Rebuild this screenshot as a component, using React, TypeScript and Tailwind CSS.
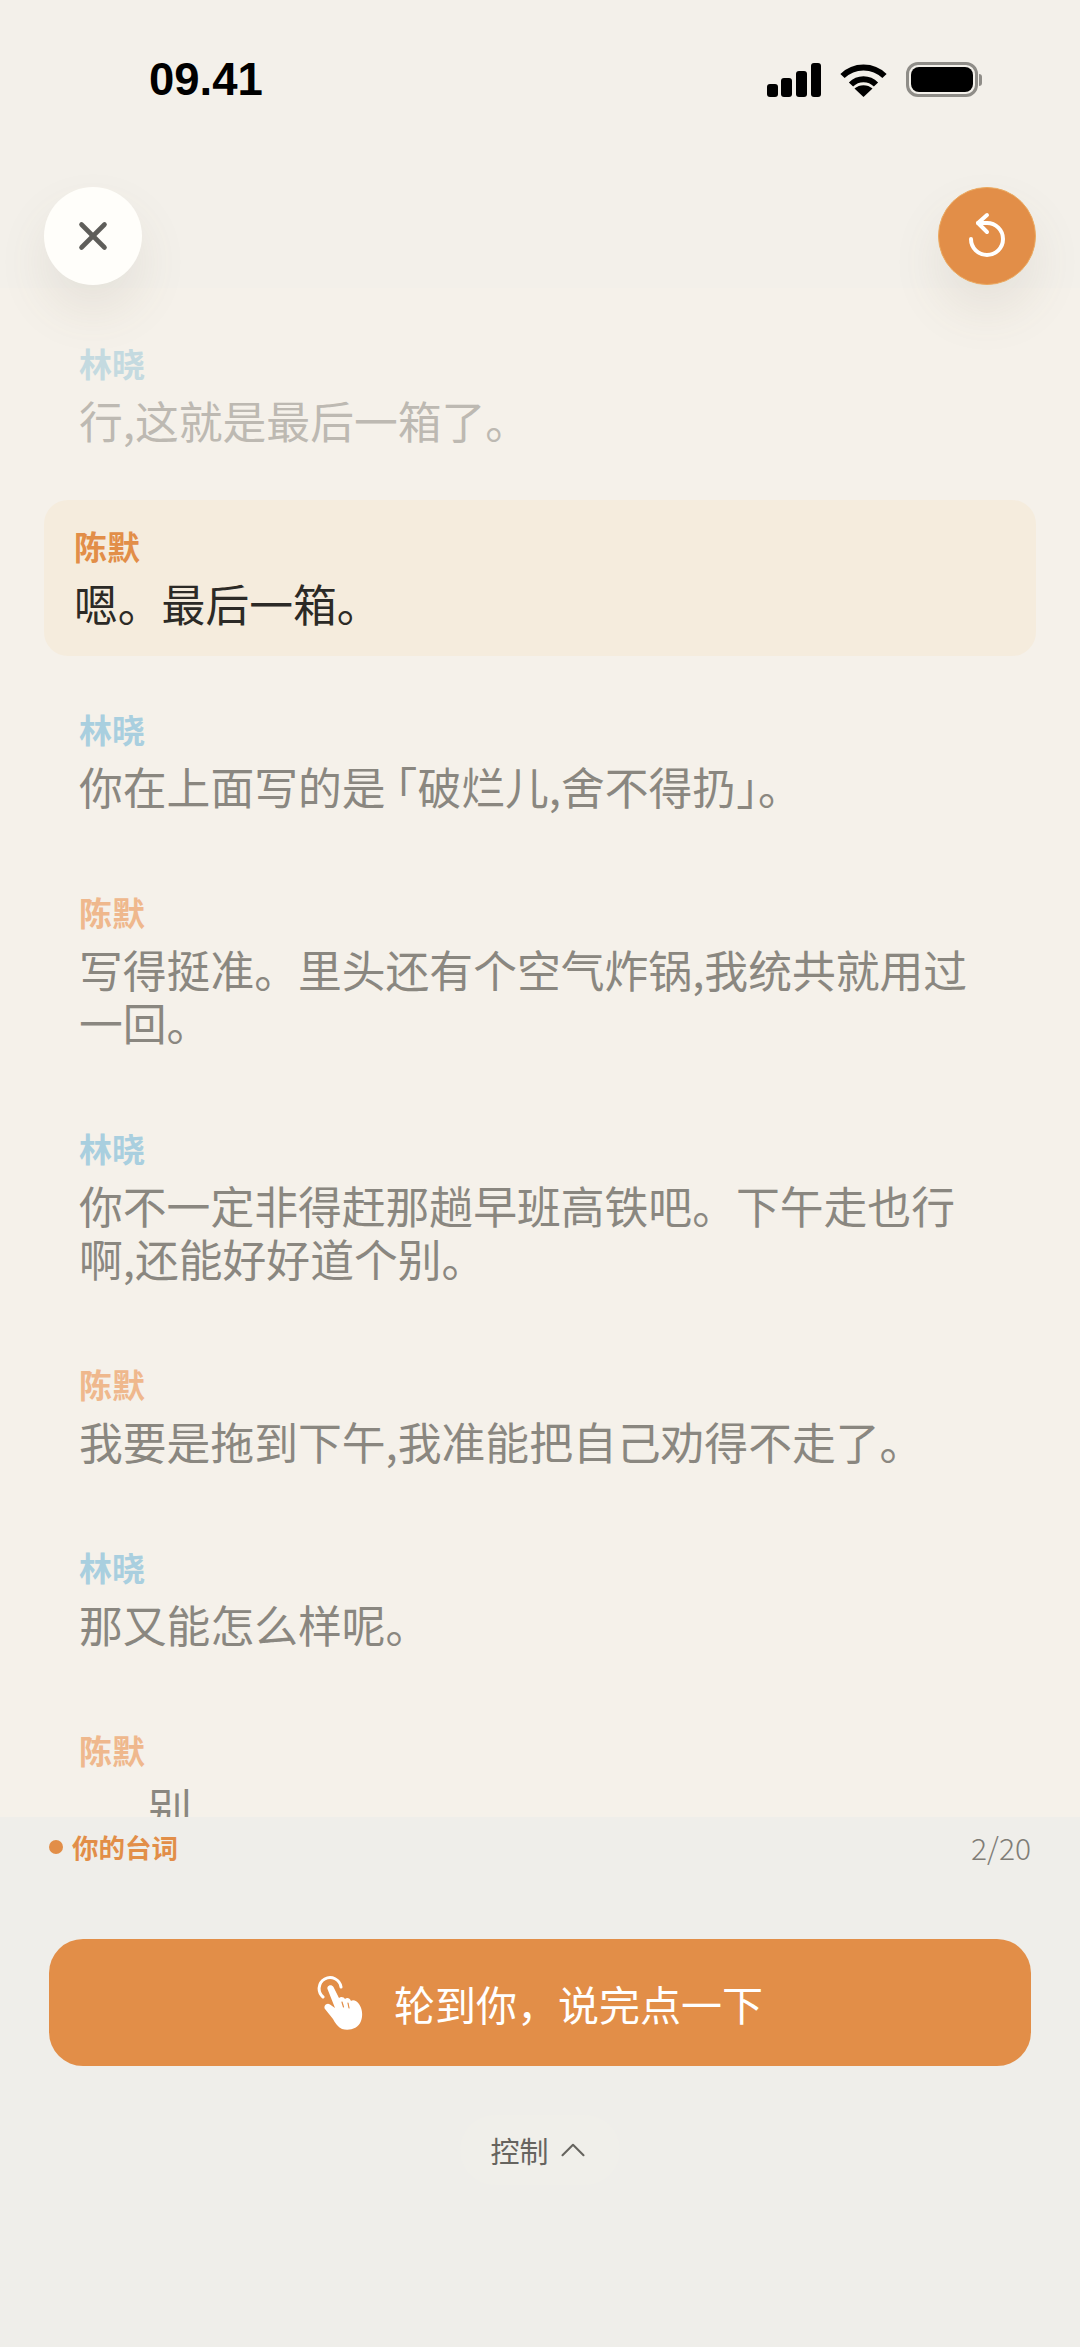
import type { ReactNode } from 'react'
import { ChevronUp, X } from 'lucide-react'

interface Line {
  who: 'lin' | 'chen'
  text: ReactNode
  faded?: boolean
  active?: boolean
  indent?: boolean
}

const lines: Line[] = [
  { who: 'lin', text: '行,这就是最后一箱了。', faded: true },
  { who: 'chen', text: '嗯。最后一箱。', active: true },
  {
    who: 'lin',
    text: (
      <>
        你在上面写的是<span className="-ml-[12px]">「</span>破烂儿,舍不得扔」。
      </>
    ),
  },
  { who: 'chen', text: '写得挺准。里头还有个空气炸锅,我统共就用过一回。' },
  { who: 'lin', text: '你不一定非得赶那趟早班高铁吧。下午走也行啊,还能好好道个别。' },
  { who: 'chen', text: '我要是拖到下午,我准能把自己劝得不走了。' },
  { who: 'lin', text: '那又能怎么样呢。' },
  { who: 'chen', text: '别', indent: true },
]

function StatusBar() {
  return (
    <div className="flex h-[120px] shrink-0 items-start justify-between pl-[149px] pr-[98px] pt-[56px]">
      <span className="font-['Liberation_Sans',sans-serif] text-[45.5px] leading-[48px] font-bold text-black">09.41</span>
      <div className="mt-[6px] flex items-center gap-[19px]">
        <svg width="54" height="34" viewBox="0 0 54 34" fill="#000">
          <rect x="0" y="21" width="11" height="13" rx="3" />
          <rect x="14" y="15" width="11" height="19" rx="3" />
          <rect x="29" y="8" width="11" height="26" rx="3" />
          <rect x="44" y="0" width="10" height="34" rx="3" />
        </svg>
        <svg width="47" height="34" viewBox="0 0 47 34" fill="none">
          <path d="M2.500 13C14 1.500 33 1.500 44.500 13" stroke="#000" strokeWidth="6" />
          <path d="M11 21.500C18 14.500 29 14.500 36 21.500" stroke="#000" strokeWidth="6" />
          <path d="M23.500 34L14.500 25.500C19.500 21 27.500 21 32.500 25.500Z" fill="#000" />
        </svg>
        <div className="flex items-center">
          <div className="flex h-[35px] w-[72px] items-center justify-center rounded-[12px] border-[3px] border-[#8f8d88] p-[2px]">
            <div className="h-full w-full rounded-[8px] bg-black" />
          </div>
          <div className="ml-[1px] h-[12px] w-[3px] rounded-r-[3px] bg-[#8f8d88]" />
        </div>
      </div>
    </div>
  )
}

function Header() {
  return (
    <div className="relative z-10 flex h-[168px] shrink-0 items-start justify-between px-[44px] pt-[67px]">
      <button className="flex h-[98px] w-[98px] items-center justify-center rounded-full bg-[#fffefa] text-[#5f5e5a] shadow-[0_26px_50px_rgba(110,100,80,0.1)]">
        <X size={46} strokeWidth={2.4} />
      </button>
      <button className="flex h-[98px] w-[98px] items-center justify-center rounded-full border border-[#eba95f] bg-[#e28e48] shadow-[0_26px_50px_rgba(110,100,80,0.1)]">
        <svg width="44" height="48" viewBox="0 0 44 48" fill="none" stroke="#fff" strokeWidth="4" strokeLinecap="round" strokeLinejoin="round">
          <path d="M6 27A16 16 0 1 0 22 11H13" />
          <path d="M22 3L13 11L22 20" />
        </svg>
      </button>
    </div>
  )
}

function TapIcon() {
  return (
    <svg width="46" height="56" viewBox="0 0 46 56" fill="none">
      <path d="M6 22A11 11 0 1 1 24 12" stroke="#fff" strokeWidth="3" strokeLinecap="round" />
      <path
        d="M10.500 14C9.500 10.500 14.500 8.500 16.500 12L22 23C24 21 27 22 28 24C30 22 33 23 34 26C36 24 40 26 42 29C45.500 34 46 41 44 46C41 54 32 56 25 54C21 52 18 48 16 44L8 34C6 31 10 27 13 29.500L18 33Z"
        fill="#fff"
      />
      <path d="M25 27L26.500 32M31 28L32 33" stroke="#e28e48" strokeWidth="1.200" strokeLinecap="round" />
    </svg>
  )
}

function Item({ line }: { line: Line }) {
  const isLin = line.who === 'lin'
  let nameColor = isLin ? 'text-[#a9cfdf]' : 'text-[#efb88d]'
  let textColor = 'text-[#8a8780]'
  if (line.faded) {
    nameColor = 'text-[#c4dae0]'
    textColor = 'text-[#bdb9b2]'
  }
  if (line.active) {
    nameColor = 'text-[#e28e48]'
    textColor = 'text-[#2c2a26]'
  }

  return (
    <div className={line.active ? 'rounded-[24px] bg-[#f5ecdd] px-[30px] py-[26px]' : 'px-[35px] py-[26px]'}>
      <div className={`text-[33px] leading-[40px] font-bold ${nameColor}`}>{isLin ? '林晓' : '陈默'}</div>
      <p className={`mt-[11px] text-[43.8px] leading-[53px] ${textColor} ${line.indent ? 'pl-[69px]' : ''}`}>{line.text}</p>
    </div>
  )
}

export default function App() {
  return (
    <div className="flex h-[2347px] w-[1080px] flex-col overflow-hidden bg-[#f3f0ea] font-['Noto_Sans_CJK_SC',sans-serif]">
      <StatusBar />
      <Header />

      <div className="flex min-h-0 flex-1 flex-col gap-[27px] overflow-hidden bg-[#f5f1ea] px-[44px] pt-[29px]">
        {lines.map((line, i) => (
          <Item key={i} line={line} />
        ))}
      </div>

      <div className="flex h-[530px] shrink-0 flex-col bg-[#efeeea] px-[49px] pt-[10px]">
        <div className="flex h-[40px] items-center justify-between">
          <div className="flex items-center gap-[9px]">
            <span className="h-[14px] w-[14px] rounded-full bg-[#e28e48]" />
            <span className="text-[26.500px] leading-[40px] font-bold text-[#e28e48]">你的台词</span>
          </div>
          <span className="text-[30px] leading-[40px] font-light text-[#7f7d77]">2/20</span>
        </div>

        <button className="mt-[72px] flex h-[127px] items-center justify-center gap-[31px] rounded-[34px] bg-[#e28e48] text-white">
          <TapIcon />
          <span className="text-[41px] leading-[50px]">{'轮到你\uFF0C说完点一下'}</span>
        </button>

        <div className="mt-[49px] flex justify-center">
          <div className="flex h-[70px] items-center gap-[3px] rounded-full bg-[#f0efea] pl-[30px] pr-[26px] text-[#66645f]">
            <span className="text-[29px] leading-[40px]">控制</span>
            <ChevronUp size={42} strokeWidth={1.200} />
          </div>
        </div>
      </div>
    </div>
  )
}
